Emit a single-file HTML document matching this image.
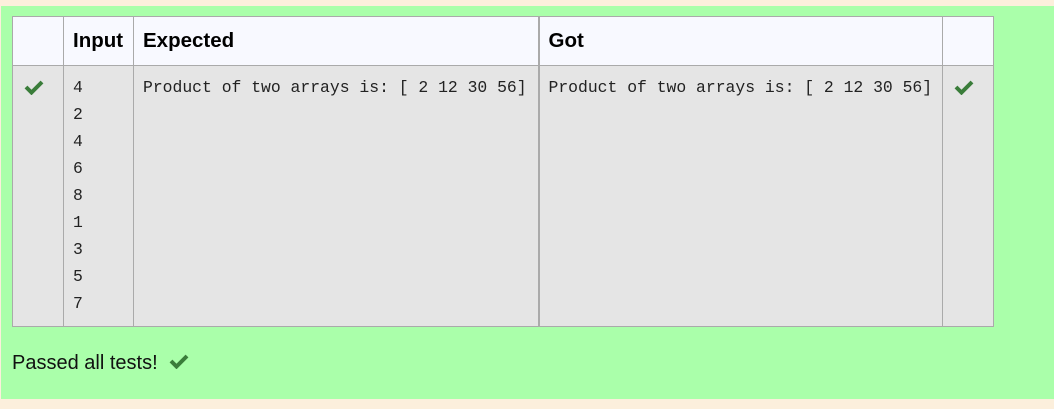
<!DOCTYPE html>
<html><head><style>
body{margin:0;background:#fcefdc;width:1054px;height:409px;overflow:hidden;font-family:"Liberation Sans",sans-serif}
.box{position:absolute;left:1px;top:6px;width:1053px;height:393px;background:#aaffaa}
table{position:absolute;left:11px;top:10px;border-collapse:collapse;table-layout:fixed;width:981px}
td,th{border:1px solid #aaa;padding:0;vertical-align:top;text-align:left;box-sizing:border-box}
th{background:#f8f9ff;height:49px;font-size:20.5px;font-weight:bold;vertical-align:middle;padding-left:9px;color:#000}
td{background:#e5e5e5;height:261px}
pre{margin:0;font-family:"Liberation Mono",monospace;font-size:16.4px;line-height:27px;padding:8px 0 0 9px;color:#222}
.ck{padding:13px 0 0 11px}
.p{position:absolute;left:11px;top:346px;font-size:20px;color:#111}
</style></head><body>
<div class="box">
<table>
<colgroup><col style="width:51px"><col style="width:70px"><col style="width:405px"><col style="width:404px"><col style="width:51px"></colgroup>
<tr><th style="padding:0"></th><th>Input</th><th>Expected</th><th style="border-left:2px solid #aaa">Got</th><th style="padding:0"></th></tr>
<tr><td><div class="ck"><svg width="20" height="16" viewBox="0 0 20 16"><path d="M2 8 L7.5 13.5 L18 3" fill="none" stroke="#3a7d3a" stroke-width="4"/></svg></div></td><td><pre>4
2
4
6
8
1
3
5
7</pre></td><td><pre>Product of two arrays is: [ 2 12 30 56]</pre></td><td style="border-left:2px solid #aaa"><pre>Product of two arrays is: [ 2 12 30 56]</pre></td><td><div class="ck"><svg width="20" height="16" viewBox="0 0 20 16"><path d="M2 8 L7.5 13.5 L18 3" fill="none" stroke="#3a7d3a" stroke-width="4"/></svg></div></td></tr>
</table>
<div class="p">Passed all tests! <svg width="20" height="16" viewBox="0 0 20 16" style="margin-left:6px"><path d="M2 8 L7.5 13.5 L18 3" fill="none" stroke="#3a7d3a" stroke-width="4"/></svg></div>
</div>
</body></html>
